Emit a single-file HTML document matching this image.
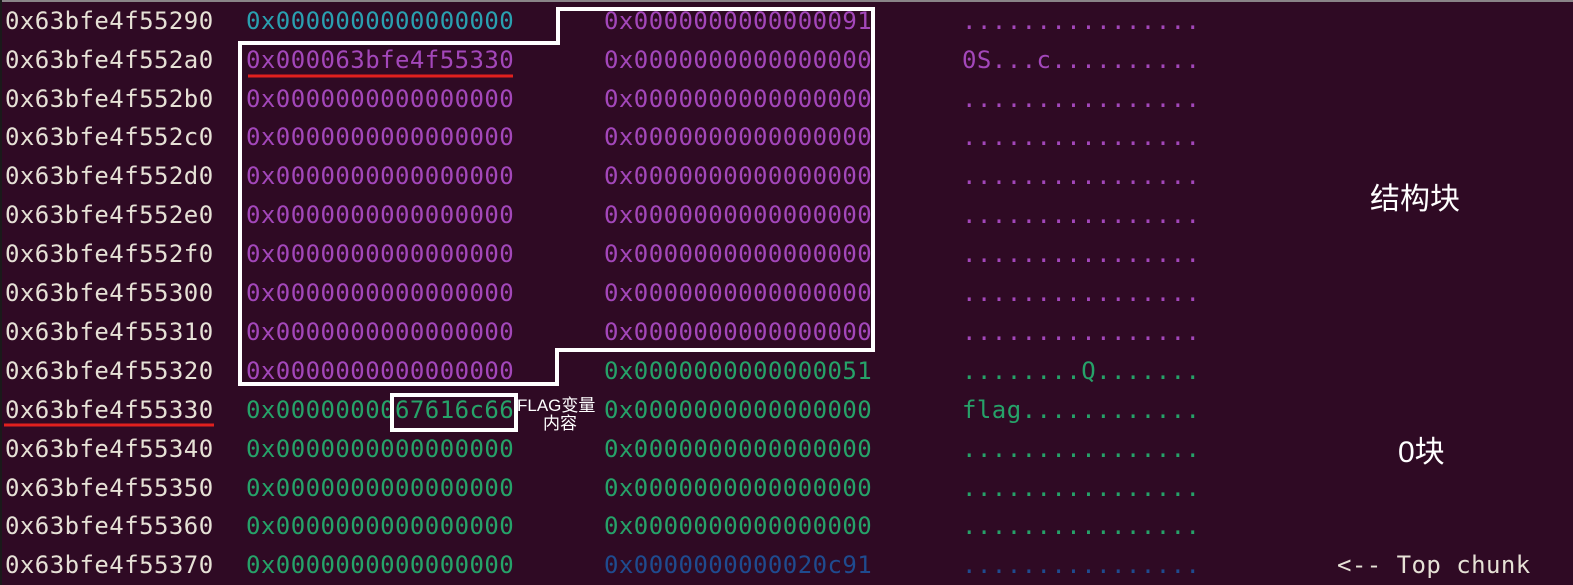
<!DOCTYPE html>
<html><head><meta charset="utf-8"><style>
html,body{margin:0;padding:0;width:1573px;height:585px;overflow:hidden;background:#2f0a24;}
body{position:relative;font-family:"DejaVu Sans Mono","Liberation Mono",monospace;font-size:24px;letter-spacing:0.45px;}
.top{position:absolute;left:0;top:0;width:1573px;height:2px;background:#8a8488;}
.lb{position:absolute;left:0;top:0;width:2px;height:585px;background:#1a1a1a;}
.r{position:absolute;left:0;height:39px;line-height:39px;white-space:pre;}
.r span{position:absolute;top:0;}
.a{left:5px;color:#e6e1d6;}
.c2{left:246px;}.c3{left:604px;}.c4{left:962px;}
.cy{color:#2aa0b0}.pu{color:#a347ba}.gr{color:#26a269}.bl{color:#1f4b8f}
.cj{position:absolute;color:#fff;font-family:"Liberation Sans","Noto Sans CJK SC",sans-serif;letter-spacing:0;}
</style></head><body>
<div class="top"></div><div class="lb"></div>

<div class="r" style="top:2px"><span class="a">0x63bfe4f55290</span><span class="c2 cy">0x0000000000000000</span><span class="c3 pu">0x0000000000000091</span><span class="c4 pu">................</span></div>
<div class="r" style="top:41px"><span class="a">0x63bfe4f552a0</span><span class="c2 pu">0x000063bfe4f55330</span><span class="c3 pu">0x0000000000000000</span><span class="c4 pu">0S...c..........</span></div>
<div class="r" style="top:80px"><span class="a">0x63bfe4f552b0</span><span class="c2 pu">0x0000000000000000</span><span class="c3 pu">0x0000000000000000</span><span class="c4 pu">................</span></div>
<div class="r" style="top:118px"><span class="a">0x63bfe4f552c0</span><span class="c2 pu">0x0000000000000000</span><span class="c3 pu">0x0000000000000000</span><span class="c4 pu">................</span></div>
<div class="r" style="top:157px"><span class="a">0x63bfe4f552d0</span><span class="c2 pu">0x0000000000000000</span><span class="c3 pu">0x0000000000000000</span><span class="c4 pu">................</span></div>
<div class="r" style="top:196px"><span class="a">0x63bfe4f552e0</span><span class="c2 pu">0x0000000000000000</span><span class="c3 pu">0x0000000000000000</span><span class="c4 pu">................</span></div>
<div class="r" style="top:235px"><span class="a">0x63bfe4f552f0</span><span class="c2 pu">0x0000000000000000</span><span class="c3 pu">0x0000000000000000</span><span class="c4 pu">................</span></div>
<div class="r" style="top:274px"><span class="a">0x63bfe4f55300</span><span class="c2 pu">0x0000000000000000</span><span class="c3 pu">0x0000000000000000</span><span class="c4 pu">................</span></div>
<div class="r" style="top:313px"><span class="a">0x63bfe4f55310</span><span class="c2 pu">0x0000000000000000</span><span class="c3 pu">0x0000000000000000</span><span class="c4 pu">................</span></div>
<div class="r" style="top:352px"><span class="a">0x63bfe4f55320</span><span class="c2 pu">0x0000000000000000</span><span class="c3 gr">0x0000000000000051</span><span class="c4 gr">........Q.......</span></div>
<div class="r" style="top:391px"><span class="a">0x63bfe4f55330</span><span class="c2 gr">0x0000000067616c66</span><span class="c3 gr">0x0000000000000000</span><span class="c4 gr">flag............</span></div>
<div class="r" style="top:430px"><span class="a">0x63bfe4f55340</span><span class="c2 gr">0x0000000000000000</span><span class="c3 gr">0x0000000000000000</span><span class="c4 gr">................</span></div>
<div class="r" style="top:469px"><span class="a">0x63bfe4f55350</span><span class="c2 gr">0x0000000000000000</span><span class="c3 gr">0x0000000000000000</span><span class="c4 gr">................</span></div>
<div class="r" style="top:507px"><span class="a">0x63bfe4f55360</span><span class="c2 gr">0x0000000000000000</span><span class="c3 gr">0x0000000000000000</span><span class="c4 gr">................</span></div>
<div class="r" style="top:546px"><span class="a">0x63bfe4f55370</span><span class="c2 gr">0x0000000000000000</span><span class="c3 bl">0x0000000000020c91</span><span class="c4 bl">................</span><span style="left:1337px;color:#e6e1d6">&lt;-- Top chunk</span></div>

<svg width="1573" height="585" style="position:absolute;left:0;top:0" xmlns="http://www.w3.org/2000/svg">
<polygon points="558,9 873,9 873,350 557,350 557,384 240,384 240,43 558,43" fill="none" stroke="#fff" stroke-width="4"/>
<rect x="392" y="395" width="124" height="35" fill="none" stroke="#fff" stroke-width="4"/>
<line x1="248" y1="76" x2="513" y2="76" stroke="#e0201e" stroke-width="3"/>
<line x1="4" y1="425" x2="214" y2="425" stroke="#e0201e" stroke-width="3"/>
</svg>

<div class="cj" style="left:517px;top:396px;font-size:17px;line-height:19px;">FLAG变量</div>
<div class="cj" style="left:543px;top:414px;font-size:17px;line-height:19px;">内容</div>
<div class="cj" style="left:1370px;top:182px;font-size:30px;line-height:36px;">结构块</div>
<div class="cj" style="left:1398px;top:435px;font-size:30px;line-height:36px;">0块</div>
</body></html>
